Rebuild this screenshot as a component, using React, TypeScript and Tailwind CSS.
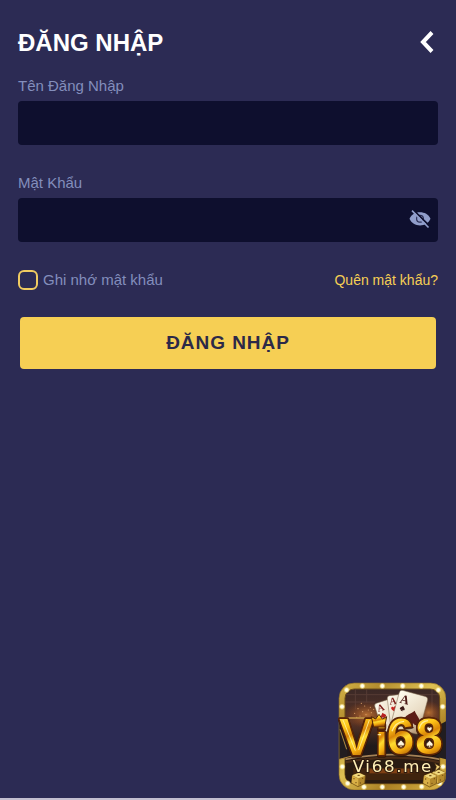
import { useState } from "react";

const bulbs = [
  [44, 42], [91, 30], [151, 30], [212, 30], [268, 30], [319, 42],
  [30, 92], [332, 92], [31, 272], [333, 272],
  [47, 322], [96, 333], [151, 333], [215, 333], [269, 332], [323, 322],
];

const sparks = [
  [68, 112], [78, 98], [84, 120], [92, 107], [98, 90], [102, 116], [109, 102], [115, 94], [118, 110], [125, 100], [74, 124], [88, 82],
];

// 20x22 pips, placed from their top-left corner
const spadePath = "M10 0C13 5 20 8 20 13c0 5-6 6-8 3 0 3 1 5 3 6H5c2-1 3-3 3-6-2 3-8 2-8-3C0 8 7 5 10 0Z";
const heartPath = "M10 20C6 15 0 11 0 6c0-6 8-7 10-1 2-6 10-5 10 1 0 5-6 9-10 14Z";

function EyeOff() {
  return (
    <svg viewBox="0 0 24 20" className="h-5 w-6" fill="none" aria-hidden="true">
      <path d="M1.500 8.800C3.500 4.300 7.500 2.300 12 2.300s8.500 2 10.500 6.500c-2 4.500-6 6.600-10.500 6.600S3.500 13.300 1.500 8.800Z" fill="#919ecb" />
      <circle cx="12" cy="8.800" r="4" fill="#2a2e55" />
      <circle cx="12" cy="8.800" r="2.800" fill="#919ecb" />
      <path d="M5.500 0.200 21.500 15.800" stroke="#0e0f2e" strokeWidth="1.800" />
      <path d="M4 0.600 20.500 17.500" stroke="#919ecb" strokeWidth="1.600" />
    </svg>
  );
}

function Card({ transform, pip, color }: { transform: string; pip: string; color: string }) {
  return (
    <g transform={transform}>
      <rect width="60" height="90" rx="8" fill="url(#paper)" stroke="#806b50" strokeWidth="1.5" />
      <text x="5" y="27" fontFamily="Liberation Serif, serif" fontWeight="bold" fontSize="30" fill="#7a1c18">A</text>
      <path d={pip} transform="translate(8 33) scale(.8)" fill={color} />
    </g>
  );
}

function Die({ transform }: { transform: string }) {
  return (
    <g transform={transform}>
      <path d="M3 8 23 0 42 9 40 32 20 42 0 31Z" fill="#b48a2c" stroke="#6b4b12" strokeWidth="2" strokeLinejoin="round" />
      <path d="M3 8 23 0 42 9 21 17Z" fill="#efd77c" />
      <path d="M3 9 21 18 20 40 1 30Z" fill="#d9b046" />
      <g fill="#6e4a12">
        <ellipse cx="22" cy="8" rx="4" ry="2" />
        <circle cx="8" cy="18" r="2" />
        <circle cx="14" cy="30" r="2" />
        <circle cx="34" cy="17" r="2" />
        <circle cx="27" cy="31" r="2" />
      </g>
    </g>
  );
}

function Logo() {
  return (
    <svg viewBox="18 18 324 324" className="size-[108px]">
      <defs>
        <linearGradient id="frame" x1="0" y1="0" x2="1" y2="1">
          <stop offset="0" stopColor="#d5b447" />
          <stop offset=".2" stopColor="#b28d2f" />
          <stop offset=".45" stopColor="#dfc153" />
          <stop offset=".7" stopColor="#a97f24" />
          <stop offset="1" stopColor="#dfba49" />
        </linearGradient>
        <linearGradient id="gold" x1="0" y1="0" x2=".25" y2="1">
          <stop offset="0" stopColor="#fff36f" />
          <stop offset=".35" stopColor="#ffc718" />
          <stop offset=".52" stopColor="#d98508" />
          <stop offset=".64" stopColor="#ffdb2f" />
          <stop offset=".82" stopColor="#f2a70d" />
          <stop offset="1" stopColor="#9d5208" />
        </linearGradient>
        <linearGradient id="paper" x1="0" y1="0" x2="1" y2="1">
          <stop offset="0" stopColor="#fffdf0" />
          <stop offset=".65" stopColor="#e8dac2" />
          <stop offset="1" stopColor="#a88762" />
        </linearGradient>
        <linearGradient id="room" x1="0" y1="0" x2="0" y2="1">
          <stop offset="0" stopColor="#3a2826" />
          <stop offset=".35" stopColor="#5a3425" />
          <stop offset=".6" stopColor="#201a1b" />
          <stop offset="1" stopColor="#27150d" />
        </linearGradient>
        <radialGradient id="bulb">
          <stop offset="0" stopColor="#fff" />
          <stop offset=".45" stopColor="#fffbd4" />
          <stop offset="1" stopColor="#ffe27a" stopOpacity="0" />
        </radialGradient>
        <radialGradient id="glow">
          <stop offset="0" stopColor="#e08a3b" stopOpacity=".7" />
          <stop offset="1" stopColor="#a44711" stopOpacity="0" />
        </radialGradient>
        <clipPath id="inside">
          <rect x="40" y="40" width="282" height="282" rx="26" />
        </clipPath>
      </defs>

      <rect x="21" y="21" width="321" height="321" rx="46" fill="url(#frame)" stroke="#8a6a25" strokeWidth="2" />
      <rect x="39" y="39" width="284" height="284" rx="28" fill="url(#room)" stroke="#6b4d18" strokeWidth="3" />
      <g clipPath="url(#inside)">
        <path d="M40 56H325M40 78H130M70 40V100M104 40V80M300 40V130" stroke="#6c4c44" strokeWidth="3" opacity=".5" />
        <ellipse cx="104" cy="116" rx="66" ry="40" fill="url(#glow)" />
        <ellipse cx="290" cy="110" rx="40" ry="36" fill="url(#glow)" />
        {sparks.map(([x, y]) => (
          <circle key={`${x}-${y}`} cx={x} cy={y} r="1.800" fill="#d9a068" />
        ))}
        <path d="M40 126H130" stroke="#c49a49" strokeWidth="4" />
        <path d="M40 252Q180 226 324 252V324H40Z" fill="#2a1b11" />
        <path d="M64 276H300V312H64Z" fill="#3f240e" />
        <path d="M40 250Q180 222 324 250" fill="none" stroke="#a58256" strokeWidth="5" />
        <path d="M40 259Q180 231 324 259" fill="none" stroke="#4b2d18" strokeWidth="7" />
        <rect x="112" y="278" width="130" height="14" fill="#9a4c16" opacity=".7" />
      </g>
      <path d="M22 130H46V244L22 250Z" fill="#211d20" />
      <path d="M22 250 60 240M24 160l20 60" stroke="#b48a3e" strokeWidth="3" />
      <path d="M316 150 342 136V250L312 242Z" fill="#211d20" />
      {bulbs.map(([x, y]) => (
        <circle key={`${x}-${y}`} cx={x} cy={y} r="10" fill="url(#bulb)" />
      ))}

      <Card transform="translate(126 84) rotate(-18)" pip={spadePath} color="#b61f20" />
      <Card transform="translate(165 60) rotate(-7)" pip={heartPath} color="#c52420" />
      <g transform="translate(204 41) rotate(15)">
        <rect width="88" height="116" rx="10" fill="url(#paper)" stroke="#806b50" strokeWidth="1.5" />
        <text x="8" y="38" fontFamily="Liberation Serif, serif" fontWeight="bold" fontSize="38" fill="#4d1b18">A</text>
        <path d={spadePath} transform="translate(14 44) scale(.75)" fill="#3b1a18" />
        <path d={spadePath} transform="translate(36 50) scale(2.300)" fill="#5b1d17" />
      </g>

      <g
        fontFamily="Liberation Sans, sans-serif"
        fontWeight="bold"
        strokeLinejoin="round"
        fill="url(#gold)"
        stroke="#5a2507"
        strokeWidth="10"
        style={{ paintOrder: "stroke" }}
        className="drop-shadow-[0_2px_1px_#1d0d05]"
      >
        <text x="22" y="236" fontSize="156">V</text>
        <text x="131" y="236" fontSize="126">i</text>
        <text x="164" y="235" fontSize="148">6</text>
        <text x="250" y="235" fontSize="148">8</text>
      </g>
      <path d="m118 122 13 7 10-14 10 14 13-7-6 31h-33Z" fill="url(#gold)" stroke="#552707" strokeWidth="3" />
      <path d="M33 132 70 224M112 132 80 222" fill="none" stroke="#fff6a6" strokeWidth="3" opacity=".8" />
      <path d="M137 176h10M180 166q10-28 36-30M262 158q4-22 26-24" fill="none" stroke="#fff6b4" strokeWidth="4" opacity=".8" />
      <g fill="#fff8df" stroke="#6a3b12" strokeWidth="2">
        <path d={spadePath} transform="translate(197 192)" />
        <path d={spadePath} transform="translate(283 193)" />
        <path d={heartPath} transform="translate(285 152) scale(.75)" />
      </g>

      <Die transform="translate(58 290)" />
      <Die transform="translate(298 281)" />
      <Die transform="translate(273 291)" />
      <text x="62" y="289" fontFamily="DejaVu Sans, sans-serif" fontSize="50" className="tracking-widest" fill="#fff0b8" stroke="#2b190d" strokeWidth="6" style={{ paintOrder: "stroke" }}>
        Vi68.me
      </text>
      <path d="m308 262 17 10-17 15 5-15Z" fill="#f3d67c" stroke="#4b2b0b" strokeWidth="2" />
    </svg>
  );
}

export default function App() {
  const [showPassword, setShowPassword] = useState(false);

  return (
    <div className="flex min-h-screen flex-col border-b-2 border-[#c3bfd0] bg-[#2c2b54] font-['Liberation_Sans',Arial,sans-serif]">
      <main className="px-[18px] pt-6">
        <header className="flex h-9 items-center justify-between">
          <h1 className="pt-0.5 text-2xl font-bold text-white">ĐĂNG NHẬP</h1>
          <button type="button" aria-label="Quay lại" className="flex h-9 w-6 items-center justify-end pr-1">
            <svg viewBox="0 0 14 24" className="h-6 w-3.5" fill="none" stroke="white" strokeWidth="4" aria-hidden="true">
              <path d="M12 2.500 3 12l9 9.500" />
            </svg>
          </button>
        </header>

        <form onSubmit={(e) => e.preventDefault()}>
          <label htmlFor="username" className="mt-4 block text-[15px] leading-5 text-[#838ebc]">
            Tên Đăng Nhập
          </label>
          <input id="username" type="text" className="mt-[5px] block h-11 w-full rounded bg-[#0e0f2e] px-3 text-white outline-none" />

          <label htmlFor="password" className="mt-7 block text-[15px] leading-5 text-[#838ebc]">
            Mật Khẩu
          </label>
          <div className="mt-[5px] flex h-11 items-center rounded bg-[#0e0f2e] pr-1.5">
            <input
              id="password"
              type={showPassword ? "text" : "password"}
              className="h-full min-w-0 flex-1 bg-transparent px-3 text-white outline-none"
            />
            <button type="button" aria-label="Hiện mật khẩu" onClick={() => setShowPassword(!showPassword)}>
              <EyeOff />
            </button>
          </div>

          <div className="mt-7 flex items-center justify-between">
            <label className="flex items-center gap-[5px] text-[15px] leading-5 text-[#838ebc]">
              <input type="checkbox" className="size-5 appearance-none rounded-md border-2 border-[#f0cb61] checked:bg-[#f6cf54]" />
              Ghi nhớ mật khẩu
            </label>
            <a href="#forgot" className="text-sm leading-5 text-[#f6cf54]">
              Quên mật khẩu?
            </a>
          </div>

          <div className="mt-[27px] px-0.5">
            <button type="submit" className="h-[52px] w-full rounded bg-[#f6cf54] text-[19px] font-bold tracking-wider text-[#2c2948]">
              ĐĂNG NHẬP
            </button>
          </div>
        </form>
      </main>

      <a href="#home" aria-label="Vi68.me" className="fixed right-2.5 bottom-2.5">
        <Logo />
      </a>
    </div>
  );
}
